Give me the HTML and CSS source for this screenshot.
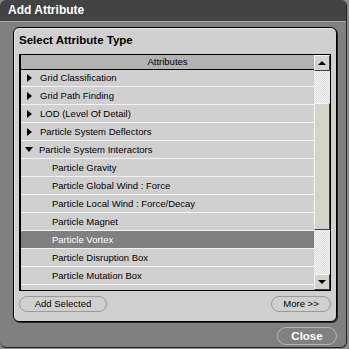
FILE: index.html
```html
<!DOCTYPE html>
<html>
<head>
<meta charset="utf-8">
<link rel="stylesheet" href="styles.css">
</head>
<body>
<div class="window">
  <div class="titlebar">Add Attribute</div>
  <div class="frame">
    <div class="panel">
      <div class="panel-title">Select Attribute Type</div>
      <div class="listbox">
        <div class="list-main">
          <div class="list-header">Attributes</div>
          <div class="rows">
            <div class="row parent"><span class="tri-right"></span>Grid Classification</div>
            <div class="row parent"><span class="tri-right"></span>Grid Path Finding</div>
            <div class="row parent"><span class="tri-right"></span>LOD (Level Of Detail)</div>
            <div class="row parent"><span class="tri-right"></span>Particle System Deflectors</div>
            <div class="row parent"><span class="tri-down"></span>Particle System Interactors</div>
            <div class="row child">Particle Gravity</div>
            <div class="row child">Particle Global Wind : Force</div>
            <div class="row child">Particle Local Wind : Force/Decay</div>
            <div class="row child">Particle Magnet</div>
            <div class="row child selected">Particle Vortex</div>
            <div class="row child">Particle Disruption Box</div>
            <div class="row child">Particle Mutation Box</div>
          </div>
        </div>
        <div class="scrollbar">
          <div class="sb-btn"><span class="arr-up"></span></div>
          <div class="sb-track sb-track-top"></div>
          <div class="sb-thumb"></div>
          <div class="sb-track sb-track-bottom"></div>
          <div class="sb-btn"><span class="arr-down"></span></div>
        </div>
      </div>
      <div class="panel-buttons">
        <div class="pill add-btn">Add Selected</div>
        <div class="pill more-btn">More &gt;&gt;</div>
      </div>
    </div>
    <div class="footer">
      <div class="pill close-btn">Close</div>
    </div>
  </div>
</div>
</body>
</html>
```

FILE: styles.css
```css
html, body {
  margin: 0;
  padding: 0;
}
body {
  width: 349px;
  height: 349px;
  background: #8a8a8a;
  font-family: "Liberation Sans", Arial, sans-serif;
  overflow: hidden;
}
.window {
  width: 346px;
  height: 347px;
  background: #808080;
  border-right: 1px solid #222;
  border-bottom: 1px solid #222;
  border-radius: 6px;
  overflow: hidden;
  display: flex;
  flex-direction: column;
}
.titlebar {
  flex: none;
  background: #434343;
  border-bottom: 1px solid #a8a8a8;
  color: #fff;
  font-weight: bold;
  font-size: 12px;
  line-height: 21px;
  padding-left: 8px;
  box-sizing: border-box;
  height: 22px;
}
.frame {
  flex: 1;
  display: flex;
  flex-direction: column;
  padding: 5px 0 0 13px;
}
.panel {
  width: 324px;
  height: 295px;
  box-sizing: border-box;
  background: #d0d0d0;
  border: 1px solid #000;
  border-radius: 6px;
  box-shadow: 1px 1px 0 #2a2a2a, inset 1px 1px 0 #e4e4e4;
  padding: 0 5px 0 5px;
  display: flex;
  flex-direction: column;
}
.panel-title {
  font-weight: bold;
  font-size: 11.5px;
  height: 26px;
  line-height: 25px;
  color: #000;
  flex: none;
}
.listbox {
  width: 312px;
  height: 237px;
  box-sizing: border-box;
  border-top: 1px solid #000;
  border-left: 2px solid #000;
  border-right: 1px solid #000;
  border-bottom: 1px solid #000;
  display: flex;
  flex: none;
  background: #d0d0d0;
}
.list-main {
  width: 293px;
  display: flex;
  flex-direction: column;
  overflow: hidden;
}
.list-header {
  height: 15px;
  box-sizing: border-box;
  background: #b3b3b3;
  border-bottom: 1px solid #000;
  text-align: center;
  font-size: 9.5px;
  line-height: 14px;
  color: #000;
  flex: none;
}
.rows {
  flex: 1;
  overflow: hidden;
}
.row {
  height: 18px;
  box-sizing: border-box;
  border-bottom: 1px solid #f2f2f2;
  font-size: 9.5px;
  line-height: 17px;
  color: #000;
  display: flex;
  align-items: center;
  white-space: nowrap;
}
.row:first-child {
  height: 17px;
  line-height: 16px;
}
.row.parent {
  padding-left: 6px;
}
.row.child {
  padding-left: 31px;
}
.row.selected {
  background: #808080;
  color: #fff;
}
.tri-right {
  width: 0;
  height: 0;
  border-top: 4px solid transparent;
  border-bottom: 4px solid transparent;
  border-left: 5px solid #000;
  margin-right: 8px;
}
.tri-down {
  width: 0;
  height: 0;
  border-left: 4px solid transparent;
  border-right: 4px solid transparent;
  border-top: 5px solid #000;
  margin-right: 6px;
  margin-left: -2px;
}
.scrollbar {
  width: 16px;
  display: flex;
  flex-direction: column;
}
.sb-btn {
  height: 16px;
  box-sizing: border-box;
  background: #d4d4cc;
  border-top: 1px solid #f4f4f4;
  border-left: 1px solid #f4f4f4;
  border-right: 1px solid #404040;
  border-bottom: 1px solid #404040;
  display: flex;
  align-items: center;
  justify-content: center;
  flex: none;
}
.arr-up {
  width: 0;
  height: 0;
  border-left: 4px solid transparent;
  border-right: 4px solid transparent;
  border-bottom: 4px solid #000;
}
.arr-down {
  width: 0;
  height: 0;
  border-left: 4px solid transparent;
  border-right: 4px solid transparent;
  border-top: 4px solid #000;
}
.sb-track {
  background: repeating-conic-gradient(#dadada 0 25%, #f8f8f8 0 50%) 0 0 / 2px 2px;
}
.sb-track-top {
  height: 32px;
  flex: none;
}
.sb-thumb {
  height: 127px;
  flex: none;
  box-sizing: border-box;
  background: #d4d4cc;
  border-top: 1px solid #f4f4f4;
  border-left: 1px solid #f4f4f4;
  border-right: 1px solid #404040;
  border-bottom: 1px solid #404040;
}
.sb-track-bottom {
  flex: 1;
}
.panel-buttons {
  display: flex;
  justify-content: space-between;
  margin-top: 5px;
  width: 312px;
}
.pill {
  height: 16px;
  box-sizing: border-box;
  border: 1px solid #9a9a9a;
  border-radius: 8px;
  font-size: 9.5px;
  line-height: 14px;
  text-align: center;
  color: #000;
}
.add-btn {
  width: 88px;
}
.more-btn {
  width: 60px;
}
.footer {
  display: flex;
  justify-content: flex-end;
  padding-right: 9px;
  margin-top: 5px;
}
.close-btn {
  width: 60px;
  height: 18px;
  border-color: #b4b4b4;
  color: #fff;
  font-weight: bold;
  font-size: 11.5px;
  line-height: 16px;
  border-radius: 9px;
}
```
